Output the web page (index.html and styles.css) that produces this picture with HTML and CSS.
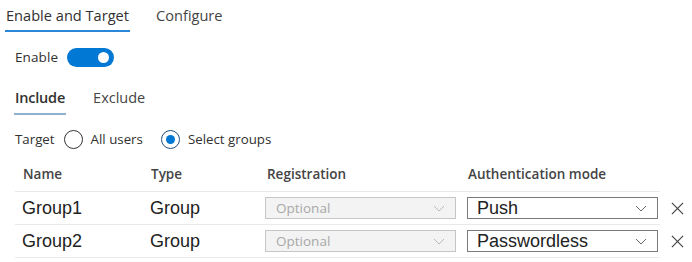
FILE: index.html
```html
<!DOCTYPE html>
<html lang="en">
<head>
  <meta charset="UTF-8">
  <meta name="viewport" content="width=device-width, initial-scale=1.0">
  <title>Enable and Target</title>
  <link rel="stylesheet" href="styles.css">
</head>
<body>
  <div class="tabs">
    <div class="tab active">Enable and Target</div>
    <div class="tab">Configure</div>
  </div>

  <div class="enable-row">
    <span>Enable</span>
    <span class="toggle"><span class="knob"></span></span>
  </div>

  <div class="subtabs">
    <div class="subtab active">Include</div>
    <div class="subtab">Exclude</div>
  </div>

  <div class="target-row">
    <span>Target</span>
    <span class="radio"></span>
    <span>All users</span>
    <span class="radio checked"></span>
    <span>Select groups</span>
  </div>

  <div class="table">
    <div class="row head">
      <div class="cells">
        <div class="th">Name</div>
        <div class="th">Type</div>
        <div class="th">Registration</div>
        <div class="th">Authentication mode</div>
      </div>
    </div>

    <div class="row">
      <div class="cells">
        <div class="td">Group1</div>
        <div class="td">Group</div>
        <div class="td"><div class="select disabled"><span>Optional</span><svg class="chev" viewBox="0 0 12 7"><path d="M1 1l5 5 5-5"/></svg></div></div>
        <div class="td"><div class="select"><span>Push</span><svg class="chev" viewBox="0 0 12 7"><path d="M1 1l5 5 5-5"/></svg></div></div>
      </div>
      <svg class="remove" viewBox="0 0 14 14"><path d="M1 1l12 12M13 1L1 13"/></svg>
    </div>

    <div class="row">
      <div class="cells">
        <div class="td">Group2</div>
        <div class="td">Group</div>
        <div class="td"><div class="select disabled"><span>Optional</span><svg class="chev" viewBox="0 0 12 7"><path d="M1 1l5 5 5-5"/></svg></div></div>
        <div class="td"><div class="select"><span>Passwordless</span><svg class="chev" viewBox="0 0 12 7"><path d="M1 1l5 5 5-5"/></svg></div></div>
      </div>
      <svg class="remove" viewBox="0 0 14 14"><path d="M1 1l12 12M13 1L1 13"/></svg>
    </div>
  </div>
</body>
</html>
```

FILE: styles.css
```css
body {
  margin: 0;
  font-family: 'Open Sans', 'Noto Sans', sans-serif;
  color: #323130;
  background: #fff;
}
.tabs {
  display: flex;
  gap: 25px;
  padding-left: 5px;
}
.tab {
  font-size: 14.6px;
  line-height: 18px;
  padding: 6px 1px 6px;
  border-bottom: 2px solid transparent;
  color: #444;
}
.tab.active {
  color: #323130;
  border-bottom-color: #2b88d8;
}
.enable-row {
  display: flex;
  align-items: center;
  gap: 9px;
  margin: 15px 0 0 15px;
  font-size: 13.5px;
  letter-spacing: 0.1px;
  height: 20px;
}
.toggle {
  width: 47px;
  height: 19px;
  border-radius: 10px;
  background: #0078d4;
  display: flex;
  align-items: center;
  justify-content: flex-end;
  padding-right: 5px;
  box-sizing: border-box;
}
.knob {
  width: 11px;
  height: 11px;
  border-radius: 50%;
  background: #fff;
}
.subtabs {
  display: flex;
  gap: 26px;
  margin: 22px 0 0 14px;
}
.subtab {
  font-size: 14.5px;
  line-height: 18px;
  padding: 0 1px 6px;
  border-bottom: 2px solid transparent;
  color: #444;
}
.subtab.active {
  color: #323130;
  font-weight: 600;
  letter-spacing: -0.2px;
  border-bottom-color: #8fb0cf;
}
.target-row {
  display: flex;
  align-items: center;
  margin: 14px 0 0 15px;
  font-size: 13.3px;
  height: 20px;
}
.radio {
  width: 19px;
  height: 19px;
  border: 1px solid #333;
  border-radius: 50%;
  box-sizing: border-box;
  margin: 0 8px 0 9px;
  display: flex;
  align-items: center;
  justify-content: center;
}
.radio.checked {
  border-color: #1f4f82;
  margin-left: 18px;
}
.radio.checked::after {
  content: '';
  width: 9px;
  height: 9px;
  border-radius: 50%;
  background: #0078d4;
}
.table {
  margin: 12px 0 0 15px;
}
.row {
  display: flex;
  align-items: center;
}
.cells {
  display: grid;
  grid-template-columns: 128px 116px 201px 200px;
  align-items: center;
  border-bottom: 1px solid #eaeaea;
  box-sizing: border-box;
}
.head .cells {
  height: 31px;
  padding-bottom: 5px;
}
.row:not(.head) .cells {
  height: 33px;
}
.th {
  font-size: 13.5px;
  font-weight: 600;
  color: #444;
  padding-left: 8px;
}
.td {
  font-family: 'Liberation Sans', Arial, sans-serif;
  font-size: 18px;
  color: #222;
  padding-left: 7px;
}
.select {
  width: 191px;
  height: 22px;
  box-sizing: border-box;
  border: 1px solid #7a7a7a;
  display: flex;
  align-items: center;
  justify-content: space-between;
  padding: 0 10px 0 9px;
  background: #fff;
}
.select.disabled {
  background: #f3f3f3;
  border-color: #c6c6c6;
  font-family: 'Open Sans', sans-serif;
  font-size: 13.5px;
  color: #a8a8a8;
  padding-left: 10px;
  margin-left: -1px;
}
.chev {
  width: 12px;
  height: 7px;
  fill: none;
  stroke: #666;
  stroke-width: 1;
}
.disabled .chev {
  stroke: #bbb;
}
.remove {
  width: 13px;
  height: 13px;
  margin-left: 11px;
  fill: none;
  stroke: #444;
  stroke-width: 1.3;
}
```
